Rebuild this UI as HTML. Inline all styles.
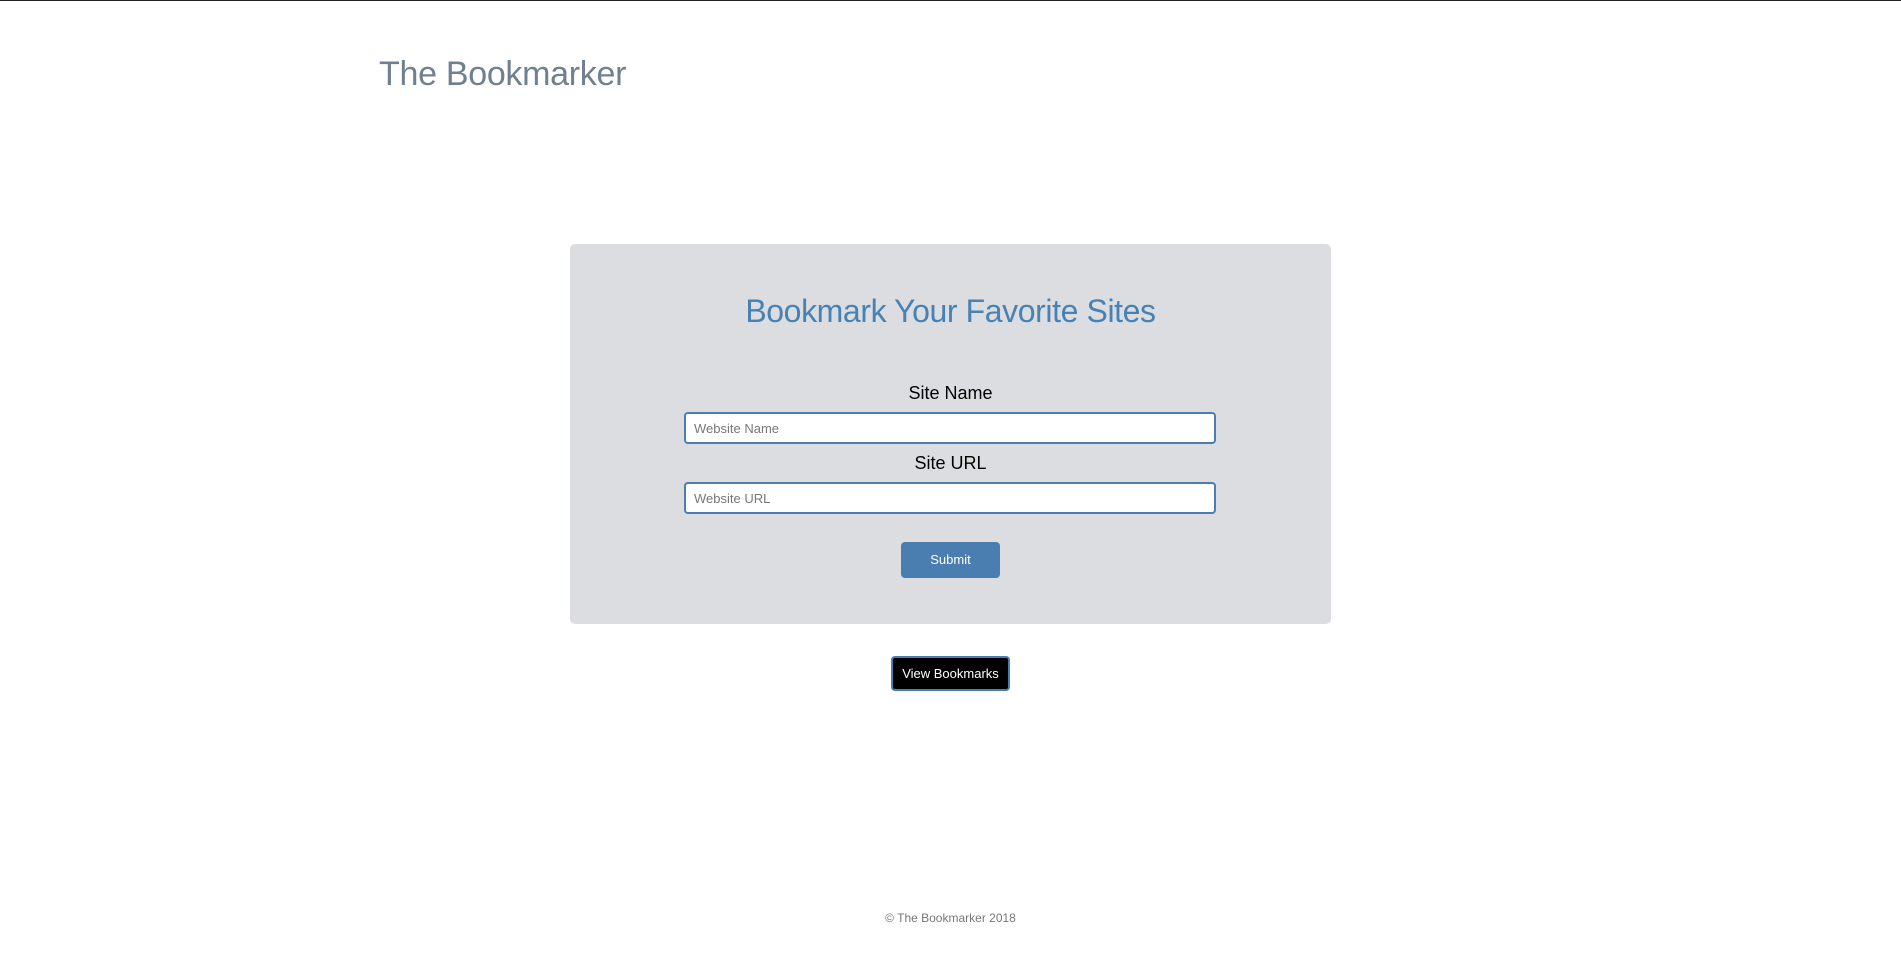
<!DOCTYPE html>
<html><head><meta charset="utf-8"><style>
*{box-sizing:border-box;margin:0;padding:0}
html,body{width:1901px;height:975px;overflow:hidden;background:#fff;font-family:"Liberation Sans",sans-serif}
body{border-top:1px solid #222;position:relative}
.brand{position:absolute;left:379px;top:53px;font-size:34px;color:#708090;line-height:40px;letter-spacing:-0.3px}
.card{position:absolute;left:570px;top:243px;width:761px;height:380px;background:#dcdde0;border-radius:5px}
.h{position:absolute;left:0;width:100%;text-align:center}
input{position:absolute;left:684px;width:532px;height:32px;border:2px solid #4a7db0;border-radius:4px;background:#fff;padding-left:8px;font-family:"Liberation Sans",sans-serif;font-size:13px;color:#777}
input::placeholder{color:#777}
.btn{position:absolute;text-align:center;font-size:13px;color:#fff}
</style></head><body>
<div class="brand">The Bookmarker</div>
<div class="card"></div>
<div class="h" style="top:290px;font-size:32px;color:#4682b4;line-height:40px;letter-spacing:-0.4px">Bookmark Your Favorite Sites</div>
<div class="h" style="top:381px;font-size:18px;color:#000;line-height:22px">Site Name</div>
<input style="top:411px" placeholder="Website Name">
<div class="h" style="top:451px;font-size:18px;color:#000;line-height:22px">Site URL</div>
<input style="top:481px" placeholder="Website URL">
<div class="btn" style="left:901px;top:541px;width:99px;height:36px;line-height:36px;background:#4a7eb0;border-radius:4px">Submit</div>
<div class="btn" style="left:891px;top:655px;width:119px;height:35px;line-height:31px;background:#000;border:2px solid #4a7db0;border-radius:4px">View Bookmarks</div>
<div class="h" style="top:909px;font-size:12px;color:#777;line-height:16px">© The Bookmarker 2018</div>
</body></html>
